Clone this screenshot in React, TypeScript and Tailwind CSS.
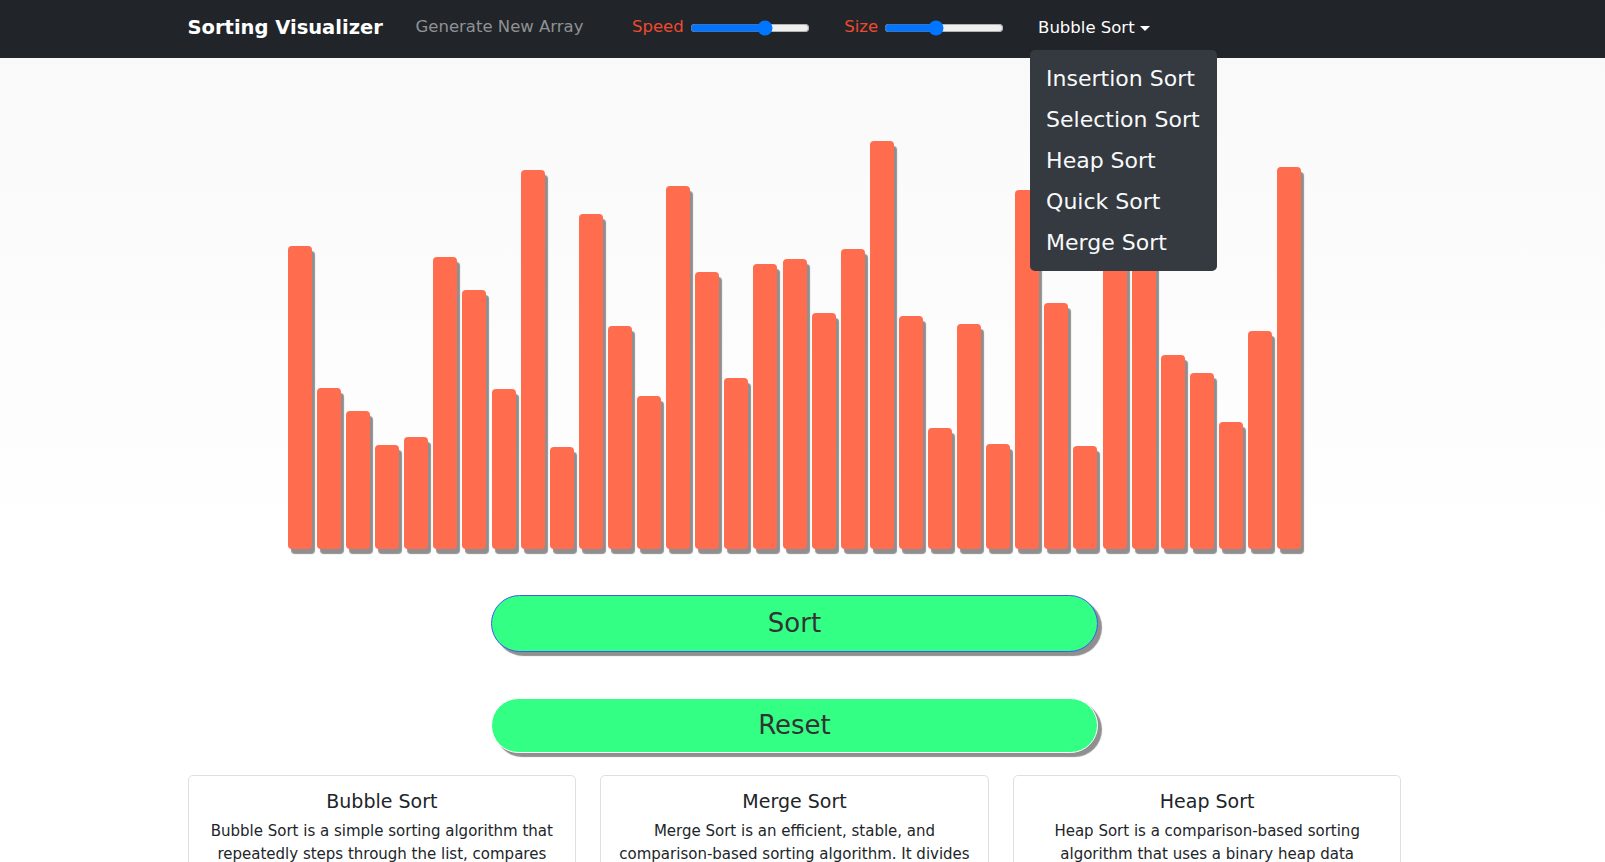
import { ReactNode } from "react";

const bars = [
    303, 161, 138, 104, 112, 292, 259, 160, 379, 102, 335, 223, 153, 363, 277,
    171, 285, 290, 236, 300, 408, 233, 121, 225, 105, 359, 246, 103, 330, 300,
    194, 176, 127, 218, 382,
];

const algos = [
    "Insertion Sort",
    "Selection Sort",
    "Heap Sort",
    "Quick Sort",
    "Merge Sort",
];

const cards = [
    {
        title: "Bubble Sort",
        text: "Bubble Sort is a simple sorting algorithm that repeatedly steps through the list, compares adjacent elements and swaps them if they are in the wrong order.",
    },
    {
        title: "Merge Sort",
        text: "Merge Sort is an efficient, stable, and comparison-based sorting algorithm. It divides the array into two halves, sorts them and merges the sorted halves.",
    },
    {
        title: "Heap Sort",
        text: "Heap Sort is a comparison-based sorting algorithm that uses a binary heap data structure to repeatedly extract the largest element.",
    },
];

interface SliderProps {
    label: string;
    value: number;
    children?: ReactNode;
}

function Slider({ label, value }: SliderProps) {
    return (
        <label className="flex items-center">
            <span className="text-[#f0492f]">{label}</span>
            <input
                type="range"
                min={0}
                max={100}
                defaultValue={value}
                className="ml-[6px] w-[120px] accent-[#0075ff]"
            />
        </label>
    );
}

function AlgoCard({ title, text }: { title: string; text: string }) {
    return (
        <div className="rounded-[5px] border border-[#dfdfdf] bg-white px-4 pb-4 pt-[13px] text-center text-[#212529]">
            <h5 className="mb-[7px] text-[19px] leading-[24px]">{title}</h5>
            <p className="text-[15px] leading-[22.5px]">{text}</p>
        </div>
    );
}

export default function App() {
    return (
        <div className="min-h-screen bg-white font-['DejaVu_Sans',sans-serif]">
            <nav className="h-[58px] bg-[#212529] pr-[16px]">
                <div className="mx-auto flex h-full w-[1214px] items-center pb-[3px] text-[16.5px]">
                    <span className="w-[196px] whitespace-nowrap text-[19.5px] font-bold text-white">
                        Sorting Visualizer
                    </span>
                    <span className="ml-[32px] whitespace-nowrap text-[#8f9194]">
                        Generate New Array
                    </span>
                    <div className="ml-[48.5px]">
                        <Slider label="Speed" value={65} />
                    </div>
                    <div className="ml-[34.5px]">
                        <Slider label="Size" value={42} />
                    </div>
                    <div className="relative ml-[26px]">
                        <button className="flex items-center px-2 py-2 leading-[24px] text-white">
                            Bubble Sort
                            <span className="ml-[5px] mt-[2px] h-0 w-0 border-x-[5px] border-t-[5px] border-x-transparent border-t-white" />
                        </button>
                        <ul className="absolute left-0 top-full z-10 mt-[2px] w-[187px] rounded-[5px] bg-[#343a40] py-[8px] text-[22px] text-[#f8f9fa]">
                            {algos.map((a) => (
                                <li key={a} className="whitespace-nowrap px-4 leading-[41px]">
                                    {a}
                                </li>
                            ))}
                        </ul>
                    </div>
                </div>
            </nav>

            <section className="flex h-[507px] items-end justify-center bg-linear-to-b from-[#f9f9f9] to-white pb-[16px] pr-[16px]">
                <div className="flex items-end gap-[5.1px]">
                    {bars.map((h, i) => (
                        <div
                            key={i}
                            className="w-[24px] rounded-[4px] bg-[#ff6c4e] shadow-[3px_5px_1px_#8f8f8f]"
                            style={{ height: h }}
                        />
                    ))}
                </div>
            </section>

            <div className="pr-[16px]">
                <div className="mx-auto flex w-[607px] flex-col">
                    <button className="mt-[30px] h-[57px] rounded-full border border-[#3d5cf0] bg-[#33ff85] text-[26px] text-[#333] shadow-[4px_4px_1px_#8f8f8f]">
                        Sort
                    </button>
                    <button className="mt-[46px] h-[55px] rounded-full border border-white bg-[#33ff85] text-[26px] text-[#333] shadow-[4px_4px_1px_#8f8f8f]">
                        Reset
                    </button>
                </div>
                <div className="mx-auto mt-[22px] grid w-[1214px] grid-cols-3 gap-6 pb-8">
                    {cards.map((c) => (
                        <AlgoCard key={c.title} title={c.title} text={c.text} />
                    ))}
                </div>
            </div>
        </div>
    );
}
